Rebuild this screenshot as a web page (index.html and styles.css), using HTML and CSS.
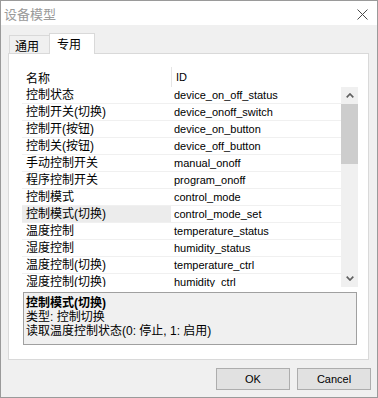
FILE: index.html
```html
<!DOCTYPE html>
<html lang="zh-CN">
<head>
<meta charset="UTF-8">
<title>设备模型</title>
<link rel="stylesheet" href="styles.css">
</head>
<body>
  <div class="window">
    <!-- Title bar -->
    <div class="titlebar">
      <span class="title">设备模型</span>
      <svg class="close" width="11" height="11" viewBox="0 0 11 11">
        <path d="M0.5 0.5 L10.5 10.5 M10.5 0.5 L0.5 10.5" stroke="#4a4a4a" stroke-width="1" fill="none"/>
      </svg>
    </div>

    <div class="client">
      <!-- Tabs -->
      <div class="tabs">
        <div class="tab">通用</div>
        <div class="tab active">专用</div>
      </div>

      <div class="panel">
        <!-- Property list -->
        <div class="list">
          <div class="list-head">
            <div class="col-name">名称</div>
            <div class="col-id">ID</div>
          </div>
          <div class="list-body">
            <div class="rows">
              <div class="row"><div class="col-name">控制状态</div><div class="col-id">device_on_off_status</div></div>
              <div class="row"><div class="col-name">控制开关(切换)</div><div class="col-id">device_onoff_switch</div></div>
              <div class="row"><div class="col-name">控制开(按钮)</div><div class="col-id">device_on_button</div></div>
              <div class="row"><div class="col-name">控制关(按钮)</div><div class="col-id">device_off_button</div></div>
              <div class="row"><div class="col-name">手动控制开关</div><div class="col-id">manual_onoff</div></div>
              <div class="row"><div class="col-name">程序控制开关</div><div class="col-id">program_onoff</div></div>
              <div class="row"><div class="col-name">控制模式</div><div class="col-id">control_mode</div></div>
              <div class="row selected"><div class="col-name">控制模式(切换)</div><div class="col-id">control_mode_set</div></div>
              <div class="row"><div class="col-name">温度控制</div><div class="col-id">temperature_status</div></div>
              <div class="row"><div class="col-name">湿度控制</div><div class="col-id">humidity_status</div></div>
              <div class="row"><div class="col-name">温度控制(切换)</div><div class="col-id">temperature_ctrl</div></div>
              <div class="row"><div class="col-name">湿度控制(切换)</div><div class="col-id">humidity_ctrl</div></div>
            </div>
            <div class="scrollbar">
              <div class="sb-btn">
                <svg width="8" height="5" viewBox="0 0 8 5"><path d="M0.7 4.3 L4 1 L7.3 4.3" stroke="#606060" stroke-width="1.7" fill="none"/></svg>
              </div>
              <div class="sb-thumb"></div>
              <div class="sb-track"></div>
              <div class="sb-btn">
                <svg width="8" height="5" viewBox="0 0 8 5"><path d="M0.7 0.7 L4 4 L7.3 0.7" stroke="#606060" stroke-width="1.7" fill="none"/></svg>
              </div>
            </div>
          </div>
        </div>

        <!-- Description of selected item -->
        <div class="info">
          <div class="info-title">控制模式(切换)</div>
          <div>类型: 控制切换</div>
          <div>读取温度控制状态(0: 停止, 1: 启用)</div>
        </div>
      </div>

      <div class="buttons">
        <button>OK</button>
        <button>Cancel</button>
      </div>
    </div>
  </div>
</body>
</html>
```

FILE: styles.css
```css
body {
  margin: 0;
  font-family: "Liberation Sans", "Noto Sans CJK SC", sans-serif;
  font-size: 12px;
  color: #000000;
  background-color: #ffffff;
}

.window {
  width: 378px;
  height: 398px;
  box-sizing: border-box;
  border: 1px solid #9a9a9a;
  display: flex;
  flex-direction: column;
}

.titlebar {
  height: 24px;
  flex: none;
  background-color: #ffffff;
  display: flex;
  align-items: center;
  justify-content: space-between;
  padding: 0 9px 0 3px;
}

.title {
  font-family: "Noto Sans CJK SC", sans-serif;
  font-size: 13px;
  line-height: 16px;
  color: #9a9a9a;
  margin-top: 1px;
}

.close {
  display: block;
  margin-top: 2px;
}

.client {
  flex: 1;
  background-color: #f0f0f0;
  padding: 8px 8px 0 7px;
  display: flex;
  flex-direction: column;
}

/* Tabs */
.tabs {
  height: 21px;
  display: flex;
  align-items: flex-end;
  padding-left: 1px;
  position: relative;
  z-index: 1;
}

.tab {
  box-sizing: border-box;
  font-family: "Noto Sans CJK SC", sans-serif;
  font-size: 12px;
  line-height: 14px;
}

.tab:not(.active) {
  width: 40px;
  height: 18px;
  margin-bottom: 1px;
  border-top: 1px solid #d9d9d9;
  border-left: 1px solid #d9d9d9;
  padding: 3px 0 0 5px;
}

.tab.active {
  width: 46px;
  height: 21px;
  background-color: #ffffff;
  border: 1px solid #d9d9d9;
  border-bottom: none;
  padding: 3px 0 0 7px;
}

.panel {
  height: 307px;
  box-sizing: border-box;
  margin-top: -1px;
  background-color: #ffffff;
  border: 1px solid #d9d9d9;
  padding: 13px 0 0 13px;
}

/* List */
.list {
  width: 336px;
}

.list-head {
  height: 20px;
  display: flex;
  align-items: center;
}

.list-head .col-name {
  width: 149px;
  box-sizing: border-box;
  padding-left: 4px;
  font-family: "Noto Sans CJK SC", sans-serif;
}

.list-head .col-id {
  height: 20px;
  line-height: 20px;
  border-left: 1px solid #e5e5e5;
  padding-left: 4px;
  font-size: 11px;
}

.list-body {
  height: 200px;
  display: flex;
}

.rows {
  width: 319px;
  overflow: hidden;
}

.row {
  height: 17px;
  box-sizing: border-box;
  border-bottom: 1px solid #f0f0f0;
  display: flex;
  align-items: center;
}

.row .col-name {
  width: 149px;
  height: 16px;
  line-height: 16px;
  box-sizing: border-box;
  padding-left: 4px;
}

.row.selected .col-name {
  background-color: #ececec;
}

.row .col-id {
  padding-left: 3px;
  font-size: 11px;
}

.scrollbar {
  width: 17px;
  background-color: #f0f0f0;
  display: flex;
  flex-direction: column;
}

.sb-btn {
  height: 17px;
  display: flex;
  align-items: center;
  justify-content: center;
}

.sb-thumb {
  height: 60px;
  background-color: #cdcdcd;
}

.sb-track {
  flex: 1;
}

/* Description box */
.info {
  width: 334px;
  height: 53px;
  box-sizing: border-box;
  margin: 5px 0 0 1px;
  border: 1px solid #a0a0a0;
  background-color: #f0f0f0;
  padding: 3px 0 0 2px;
  line-height: 14px;
}

.info-title {
  font-weight: bold;
}

/* Dialog buttons */
.buttons {
  display: flex;
  justify-content: flex-end;
  gap: 7px;
  margin: 8px -2px 0 0;
}

.buttons button {
  width: 74px;
  height: 22px;
  box-sizing: border-box;
  background-color: #e1e1e1;
  border: 1px solid #adadad;
  font-family: "Liberation Sans", sans-serif;
  font-size: 11px;
  color: #000000;
  padding: 0;
}
```
